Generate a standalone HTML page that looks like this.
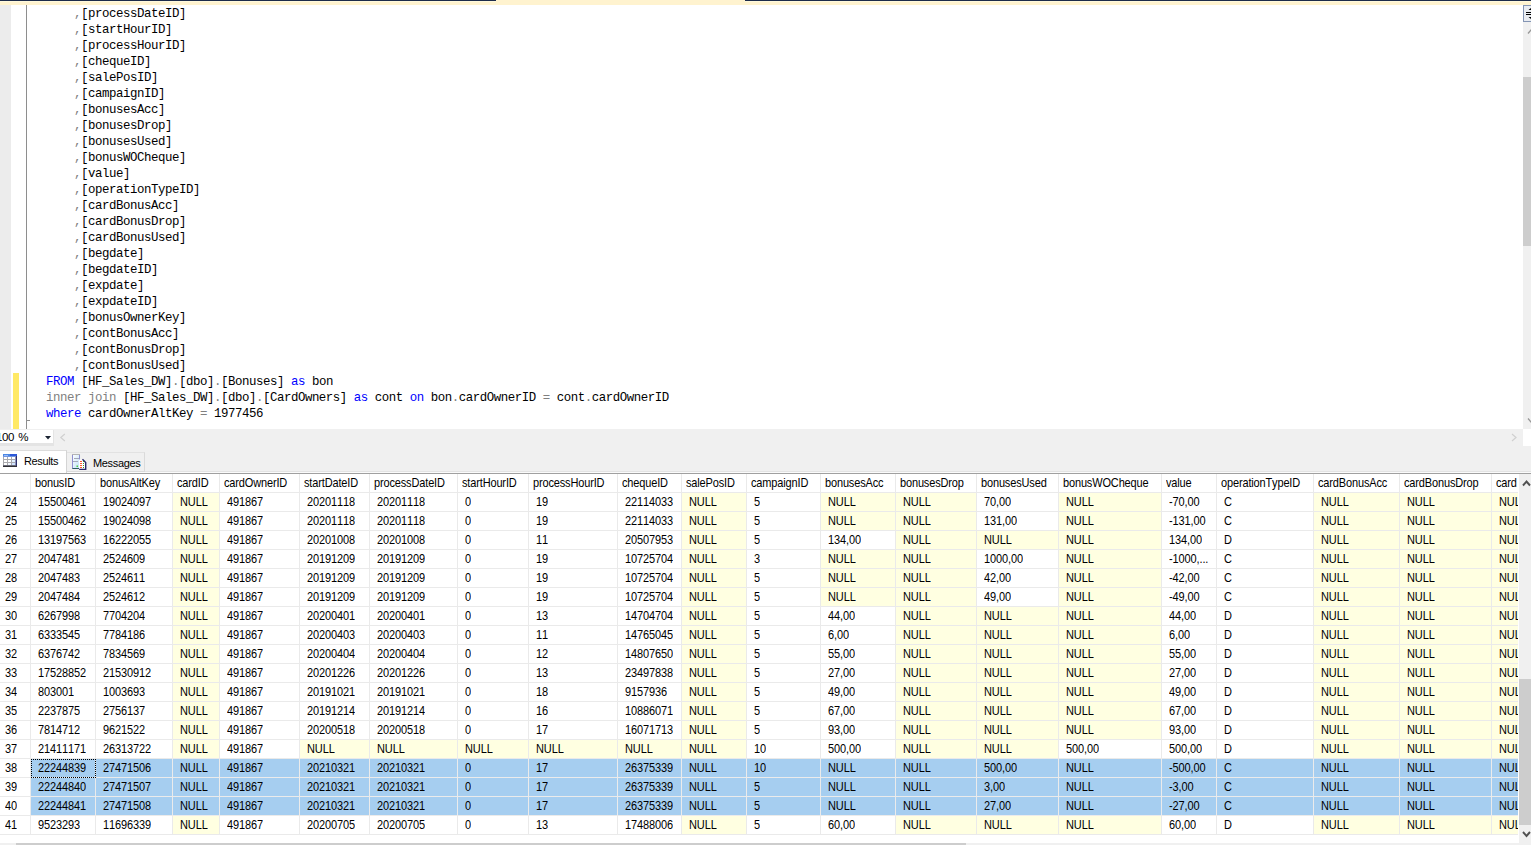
<!DOCTYPE html>
<html><head><meta charset="utf-8"><title>SQLQuery</title><style>
html,body{margin:0;padding:0;}
body{width:1531px;height:845px;overflow:hidden;background:#fff;position:relative;font-family:"Liberation Sans",sans-serif;font-size:11px;color:#000;font-kerning:none;font-variant-ligatures:none;}
div{position:absolute;box-sizing:border-box;}
#page{left:0;top:0;width:1531px;height:845px;overflow:hidden;background:#fff;}
.ln{left:46px;height:16px;line-height:16px;white-space:pre;font-family:"Liberation Mono",monospace;font-size:12.4px;letter-spacing:-0.44px;color:#000;}
.k{color:#0000ff}.g{color:#808080}
.c{height:19px;line-height:18px;padding-left:7px;white-space:nowrap;overflow:hidden;border-right:1px solid #eaeaea;border-bottom:1px solid #eaeaea;background:#fff;font-size:11px;letter-spacing:-0.12px;}
.c b{font-weight:normal;display:inline-block;transform:scaleY(1.13);transform-origin:0 13px;}
.c.h{padding-left:4px;letter-spacing:-0.15px;}
.tl{height:16px;line-height:16px;font-size:11px;letter-spacing:-0.35px;white-space:nowrap;transform:scaleY(1.07);transform-origin:0 12px;}
.c.rn{padding-left:5px;}
.c.n{background:#ffffe1;}
.c.s{background:#a6cef0;border-color:#ebebeb;}
</style></head><body><div id="page">
<!-- top strip -->
<div style="left:0;top:0;width:1531px;height:5px;background:#fff3cf"></div>
<div style="left:0;top:0;width:496px;height:1px;background:#1d2b4a"></div>
<div style="left:745px;top:0;width:786px;height:1px;background:#1d2b4a"></div>
<div style="left:0;top:1px;width:496px;height:1px;background:#fff9dc"></div>
<div style="left:745px;top:1px;width:786px;height:1px;background:#fff9dc"></div>
<!-- editor -->
<div style="left:0;top:5px;width:11px;height:424px;background:#ececec"></div>
<div style="left:13px;top:373px;width:6px;height:56px;background:#ffe966"></div>
<div style="left:26px;top:5px;width:1px;height:424px;background:#8e8e8e"></div>
<div style="left:26px;top:420px;width:4px;height:1px;background:#8e8e8e"></div>
<div class="ln" style="top:6px">    <span class="g">,</span>[processDateID]</div>
<div class="ln" style="top:22px">    <span class="g">,</span>[startHourID]</div>
<div class="ln" style="top:38px">    <span class="g">,</span>[processHourID]</div>
<div class="ln" style="top:54px">    <span class="g">,</span>[chequeID]</div>
<div class="ln" style="top:70px">    <span class="g">,</span>[salePosID]</div>
<div class="ln" style="top:86px">    <span class="g">,</span>[campaignID]</div>
<div class="ln" style="top:102px">    <span class="g">,</span>[bonusesAcc]</div>
<div class="ln" style="top:118px">    <span class="g">,</span>[bonusesDrop]</div>
<div class="ln" style="top:134px">    <span class="g">,</span>[bonusesUsed]</div>
<div class="ln" style="top:150px">    <span class="g">,</span>[bonusWOCheque]</div>
<div class="ln" style="top:166px">    <span class="g">,</span>[value]</div>
<div class="ln" style="top:182px">    <span class="g">,</span>[operationTypeID]</div>
<div class="ln" style="top:198px">    <span class="g">,</span>[cardBonusAcc]</div>
<div class="ln" style="top:214px">    <span class="g">,</span>[cardBonusDrop]</div>
<div class="ln" style="top:230px">    <span class="g">,</span>[cardBonusUsed]</div>
<div class="ln" style="top:246px">    <span class="g">,</span>[begdate]</div>
<div class="ln" style="top:262px">    <span class="g">,</span>[begdateID]</div>
<div class="ln" style="top:278px">    <span class="g">,</span>[expdate]</div>
<div class="ln" style="top:294px">    <span class="g">,</span>[expdateID]</div>
<div class="ln" style="top:310px">    <span class="g">,</span>[bonusOwnerKey]</div>
<div class="ln" style="top:326px">    <span class="g">,</span>[contBonusAcc]</div>
<div class="ln" style="top:342px">    <span class="g">,</span>[contBonusDrop]</div>
<div class="ln" style="top:358px">    <span class="g">,</span>[contBonusUsed]</div>
<div class="ln" style="top:374px"><span class="k">FROM</span> [HF_Sales_DW]<span class="g">.</span>[dbo]<span class="g">.</span>[Bonuses] <span class="k">as</span> bon</div>
<div class="ln" style="top:390px"><span class="g">inner join</span> [HF_Sales_DW]<span class="g">.</span>[dbo]<span class="g">.</span>[CardOwners] <span class="k">as</span> cont <span class="k">on</span> bon<span class="g">.</span>cardOwnerID <span class="g">=</span> cont<span class="g">.</span>cardOwnerID</div>
<div class="ln" style="top:406px"><span class="k">where</span> cardOwnerAltKey <span class="g">=</span> 1977456</div>

<!-- editor vscroll -->
<div style="left:1523px;top:5px;width:8px;height:424px;background:#f0f0f0"></div>
<div style="left:1523px;top:5px;width:9px;height:17px;background:#e9ecf1;border:1px solid #8495b4"></div>
<div style="left:1526px;top:12px;width:6px;height:1px;background:#000"></div>
<div style="left:1526px;top:14px;width:6px;height:1px;background:#000"></div>
<svg style="position:absolute;left:1523px;top:5px" width="8" height="424"><path d="M8.500 2.500l-3 2.500h3zM8.500 14.500l-3 -2.500h3z" fill="#000"/><path d="M5 28.500L8.500 24.500M5 413.500L8.500 417.500" fill="none" stroke="#989898" stroke-width="1.3"/></svg>
<div style="left:1523px;top:77px;width:8px;height:169px;background:#cdcdcd"></div>
<!-- zoom bar -->
<div style="left:0;top:429px;width:1531px;height:45px;background:#f0f0f0"></div>
<div style="left:1523px;top:429px;width:8px;height:17px;background:#fff"></div>
<div style="left:0;top:430px;width:54px;height:16px;background:#e4e4e4"></div>
<div style="left:0;top:430px;width:53px;height:13px;background:#fff"></div>
<div style="left:-4px;top:429px;height:16px;line-height:16px;font-size:11.500px;letter-spacing:-0.350px;word-spacing:1.300px;white-space:nowrap">100 %</div>
<svg style="position:absolute;left:44px;top:435px" width="8" height="6"><path d="M1 1h6l-3 3.400z" fill="#1b2433"/></svg>
<svg style="position:absolute;left:59px;top:432px" width="8" height="11"><path d="M5.800 2L1.800 5.500L5.800 9" fill="none" stroke="#d0d0d0" stroke-width="1.200"/></svg>
<svg style="position:absolute;left:1510px;top:432px" width="8" height="11"><path d="M2 2L6 5.500L2 9" fill="none" stroke="#d0d0d0" stroke-width="1.200"/></svg>
<!-- tabs -->
<div style="left:0;top:471px;width:1531px;height:1px;background:#e3e3e3"></div><div style="left:0;top:472px;width:1531px;height:1px;background:#fbfbfb"></div>
<div style="left:66px;top:452px;width:79px;height:20px;background:#f0f0f0;border:1px solid #dadada;border-top-color:#e2e2e2"></div>
<div style="left:0;top:450px;width:67px;height:23px;background:#fff;border-right:1px solid #d4d4d4;border-top:1px solid #dcdcdc"></div>
<div class="tl" style="left:24px;top:453px;">Results</div>
<div class="tl" style="left:93px;top:455px;">Messages</div>
<!-- results icon -->
<svg style="position:absolute;left:3px;top:454px" width="14" height="13" viewBox="0 0 14 13" shape-rendering="crispEdges"><rect x="0" y="0" width="14" height="13" fill="#a9a9ad"/><rect x="0" y="0" width="7" height="2" fill="#4a86e4"/><rect x="7" y="0" width="7" height="2" fill="#2c58d8"/><rect x="1" y="1" width="4" height="1" fill="#9dbcf2"/><rect x="0" y="2" width="13" height="1" fill="#6f95e2"/><rect x="1" y="3" width="3" height="2" fill="#fff"/><rect x="5" y="3" width="3" height="2" fill="#fff"/><rect x="9" y="3" width="3" height="2" fill="#fff"/><rect x="1" y="6" width="3" height="2" fill="#fff"/><rect x="5" y="6" width="3" height="2" fill="#fff"/><rect x="9" y="6" width="3" height="2" fill="#e2f1ff"/><rect x="1" y="9" width="3" height="2" fill="#fff"/><rect x="5" y="9" width="3" height="2" fill="#f2f8ff"/><rect x="9" y="9" width="3" height="2" fill="#cfe4ff"/><rect x="12" y="2" width="1" height="10" fill="#8b8fb8"/><rect x="13" y="2" width="1" height="11" fill="#2b2f6a"/><rect x="0" y="11" width="13" height="1" fill="#6a6a78"/><rect x="0" y="12" width="14" height="1" fill="#303034"/></svg>
<!-- messages icon -->
<svg style="position:absolute;left:72px;top:454px" width="15" height="16" viewBox="0 0 15 16"><defs><linearGradient id="mg" x1="0" y1="0" x2="1" y2="1"><stop offset="0" stop-color="#ffffff"/><stop offset="1" stop-color="#bfe0f8"/></linearGradient></defs><rect x="0.500" y="0.500" width="7" height="14" fill="url(#mg)" stroke="#8f8fd0"/><path d="M0 0.500h8" stroke="#b4b4b4"/><path d="M0.500 14.500h7" stroke="#2f5a60"/><path d="M2 4.500h5M1 7.500h5" stroke="#a4a8b8"/><rect x="4.500" y="11.500" width="1.500" height="1.500" fill="#4fd23c"/><path d="M7 5.500h4l2.500 2.500v7.500h-6.500z" fill="#fff"/><path d="M10.500 5.300l3.200 3.200v7h-6.500" fill="none" stroke="#2a2a6c" stroke-width="1.400"/><path d="M8 7.500h2M8 9.500h2M8 11.500h2M8 13.500h2" stroke="#ff5a30"/><path d="M11 7.500h1M11 9.500h1M11 11.500h1M11 13.500h1" stroke="#3a962e"/></svg>
<!-- grid -->
<div style="left:0;top:473px;width:1531px;height:1px;background:#a0a0a0"></div>
<div id="grid" style="left:0;top:0;width:1518px;height:843px;overflow:hidden;">
<div class="c h" style="left:0px;top:474px;width:31px"><b></b></div><div class="c h" style="left:31px;top:474px;width:65px"><b>bonusID</b></div><div class="c h" style="left:96px;top:474px;width:77px"><b>bonusAltKey</b></div><div class="c h" style="left:173px;top:474px;width:47px"><b>cardID</b></div><div class="c h" style="left:220px;top:474px;width:80px"><b>cardOwnerID</b></div><div class="c h" style="left:300px;top:474px;width:70px"><b>startDateID</b></div><div class="c h" style="left:370px;top:474px;width:88px"><b>processDateID</b></div><div class="c h" style="left:458px;top:474px;width:71px"><b>startHourID</b></div><div class="c h" style="left:529px;top:474px;width:89px"><b>processHourID</b></div><div class="c h" style="left:618px;top:474px;width:64px"><b>chequeID</b></div><div class="c h" style="left:682px;top:474px;width:65px"><b>salePosID</b></div><div class="c h" style="left:747px;top:474px;width:74px"><b>campaignID</b></div><div class="c h" style="left:821px;top:474px;width:75px"><b>bonusesAcc</b></div><div class="c h" style="left:896px;top:474px;width:81px"><b>bonusesDrop</b></div><div class="c h" style="left:977px;top:474px;width:82px"><b>bonusesUsed</b></div><div class="c h" style="left:1059px;top:474px;width:103px"><b>bonusWOCheque</b></div><div class="c h" style="left:1162px;top:474px;width:55px"><b>value</b></div><div class="c h" style="left:1217px;top:474px;width:97px"><b>operationTypeID</b></div><div class="c h" style="left:1314px;top:474px;width:86px"><b>cardBonusAcc</b></div><div class="c h" style="left:1400px;top:474px;width:92px"><b>cardBonusDrop</b></div><div class="c h" style="left:1492px;top:474px;width:27px"><b>card</b></div>
<div class="c rn" style="left:0px;top:493px;width:31px"><b>24</b></div><div class="c" style="left:31px;top:493px;width:65px"><b>15500461</b></div><div class="c" style="left:96px;top:493px;width:77px"><b>19024097</b></div><div class="c n" style="left:173px;top:493px;width:47px"><b>NULL</b></div><div class="c" style="left:220px;top:493px;width:80px"><b>491867</b></div><div class="c" style="left:300px;top:493px;width:70px"><b>20201118</b></div><div class="c" style="left:370px;top:493px;width:88px"><b>20201118</b></div><div class="c" style="left:458px;top:493px;width:71px"><b>0</b></div><div class="c" style="left:529px;top:493px;width:89px"><b>19</b></div><div class="c" style="left:618px;top:493px;width:64px"><b>22114033</b></div><div class="c n" style="left:682px;top:493px;width:65px"><b>NULL</b></div><div class="c" style="left:747px;top:493px;width:74px"><b>5</b></div><div class="c n" style="left:821px;top:493px;width:75px"><b>NULL</b></div><div class="c n" style="left:896px;top:493px;width:81px"><b>NULL</b></div><div class="c" style="left:977px;top:493px;width:82px"><b>70,00</b></div><div class="c n" style="left:1059px;top:493px;width:103px"><b>NULL</b></div><div class="c" style="left:1162px;top:493px;width:55px"><b>-70,00</b></div><div class="c" style="left:1217px;top:493px;width:97px"><b>C</b></div><div class="c n" style="left:1314px;top:493px;width:86px"><b>NULL</b></div><div class="c n" style="left:1400px;top:493px;width:92px"><b>NULL</b></div><div class="c n" style="left:1492px;top:493px;width:27px"><b>NULL</b></div>
<div class="c rn" style="left:0px;top:512px;width:31px"><b>25</b></div><div class="c" style="left:31px;top:512px;width:65px"><b>15500462</b></div><div class="c" style="left:96px;top:512px;width:77px"><b>19024098</b></div><div class="c n" style="left:173px;top:512px;width:47px"><b>NULL</b></div><div class="c" style="left:220px;top:512px;width:80px"><b>491867</b></div><div class="c" style="left:300px;top:512px;width:70px"><b>20201118</b></div><div class="c" style="left:370px;top:512px;width:88px"><b>20201118</b></div><div class="c" style="left:458px;top:512px;width:71px"><b>0</b></div><div class="c" style="left:529px;top:512px;width:89px"><b>19</b></div><div class="c" style="left:618px;top:512px;width:64px"><b>22114033</b></div><div class="c n" style="left:682px;top:512px;width:65px"><b>NULL</b></div><div class="c" style="left:747px;top:512px;width:74px"><b>5</b></div><div class="c n" style="left:821px;top:512px;width:75px"><b>NULL</b></div><div class="c n" style="left:896px;top:512px;width:81px"><b>NULL</b></div><div class="c" style="left:977px;top:512px;width:82px"><b>131,00</b></div><div class="c n" style="left:1059px;top:512px;width:103px"><b>NULL</b></div><div class="c" style="left:1162px;top:512px;width:55px"><b>-131,00</b></div><div class="c" style="left:1217px;top:512px;width:97px"><b>C</b></div><div class="c n" style="left:1314px;top:512px;width:86px"><b>NULL</b></div><div class="c n" style="left:1400px;top:512px;width:92px"><b>NULL</b></div><div class="c n" style="left:1492px;top:512px;width:27px"><b>NULL</b></div>
<div class="c rn" style="left:0px;top:531px;width:31px"><b>26</b></div><div class="c" style="left:31px;top:531px;width:65px"><b>13197563</b></div><div class="c" style="left:96px;top:531px;width:77px"><b>16222055</b></div><div class="c n" style="left:173px;top:531px;width:47px"><b>NULL</b></div><div class="c" style="left:220px;top:531px;width:80px"><b>491867</b></div><div class="c" style="left:300px;top:531px;width:70px"><b>20201008</b></div><div class="c" style="left:370px;top:531px;width:88px"><b>20201008</b></div><div class="c" style="left:458px;top:531px;width:71px"><b>0</b></div><div class="c" style="left:529px;top:531px;width:89px"><b>11</b></div><div class="c" style="left:618px;top:531px;width:64px"><b>20507953</b></div><div class="c n" style="left:682px;top:531px;width:65px"><b>NULL</b></div><div class="c" style="left:747px;top:531px;width:74px"><b>5</b></div><div class="c" style="left:821px;top:531px;width:75px"><b>134,00</b></div><div class="c n" style="left:896px;top:531px;width:81px"><b>NULL</b></div><div class="c n" style="left:977px;top:531px;width:82px"><b>NULL</b></div><div class="c n" style="left:1059px;top:531px;width:103px"><b>NULL</b></div><div class="c" style="left:1162px;top:531px;width:55px"><b>134,00</b></div><div class="c" style="left:1217px;top:531px;width:97px"><b>D</b></div><div class="c n" style="left:1314px;top:531px;width:86px"><b>NULL</b></div><div class="c n" style="left:1400px;top:531px;width:92px"><b>NULL</b></div><div class="c n" style="left:1492px;top:531px;width:27px"><b>NULL</b></div>
<div class="c rn" style="left:0px;top:550px;width:31px"><b>27</b></div><div class="c" style="left:31px;top:550px;width:65px"><b>2047481</b></div><div class="c" style="left:96px;top:550px;width:77px"><b>2524609</b></div><div class="c n" style="left:173px;top:550px;width:47px"><b>NULL</b></div><div class="c" style="left:220px;top:550px;width:80px"><b>491867</b></div><div class="c" style="left:300px;top:550px;width:70px"><b>20191209</b></div><div class="c" style="left:370px;top:550px;width:88px"><b>20191209</b></div><div class="c" style="left:458px;top:550px;width:71px"><b>0</b></div><div class="c" style="left:529px;top:550px;width:89px"><b>19</b></div><div class="c" style="left:618px;top:550px;width:64px"><b>10725704</b></div><div class="c n" style="left:682px;top:550px;width:65px"><b>NULL</b></div><div class="c" style="left:747px;top:550px;width:74px"><b>3</b></div><div class="c n" style="left:821px;top:550px;width:75px"><b>NULL</b></div><div class="c n" style="left:896px;top:550px;width:81px"><b>NULL</b></div><div class="c" style="left:977px;top:550px;width:82px"><b>1000,00</b></div><div class="c n" style="left:1059px;top:550px;width:103px"><b>NULL</b></div><div class="c" style="left:1162px;top:550px;width:55px"><b>-1000,...</b></div><div class="c" style="left:1217px;top:550px;width:97px"><b>C</b></div><div class="c n" style="left:1314px;top:550px;width:86px"><b>NULL</b></div><div class="c n" style="left:1400px;top:550px;width:92px"><b>NULL</b></div><div class="c n" style="left:1492px;top:550px;width:27px"><b>NULL</b></div>
<div class="c rn" style="left:0px;top:569px;width:31px"><b>28</b></div><div class="c" style="left:31px;top:569px;width:65px"><b>2047483</b></div><div class="c" style="left:96px;top:569px;width:77px"><b>2524611</b></div><div class="c n" style="left:173px;top:569px;width:47px"><b>NULL</b></div><div class="c" style="left:220px;top:569px;width:80px"><b>491867</b></div><div class="c" style="left:300px;top:569px;width:70px"><b>20191209</b></div><div class="c" style="left:370px;top:569px;width:88px"><b>20191209</b></div><div class="c" style="left:458px;top:569px;width:71px"><b>0</b></div><div class="c" style="left:529px;top:569px;width:89px"><b>19</b></div><div class="c" style="left:618px;top:569px;width:64px"><b>10725704</b></div><div class="c n" style="left:682px;top:569px;width:65px"><b>NULL</b></div><div class="c" style="left:747px;top:569px;width:74px"><b>5</b></div><div class="c n" style="left:821px;top:569px;width:75px"><b>NULL</b></div><div class="c n" style="left:896px;top:569px;width:81px"><b>NULL</b></div><div class="c" style="left:977px;top:569px;width:82px"><b>42,00</b></div><div class="c n" style="left:1059px;top:569px;width:103px"><b>NULL</b></div><div class="c" style="left:1162px;top:569px;width:55px"><b>-42,00</b></div><div class="c" style="left:1217px;top:569px;width:97px"><b>C</b></div><div class="c n" style="left:1314px;top:569px;width:86px"><b>NULL</b></div><div class="c n" style="left:1400px;top:569px;width:92px"><b>NULL</b></div><div class="c n" style="left:1492px;top:569px;width:27px"><b>NULL</b></div>
<div class="c rn" style="left:0px;top:588px;width:31px"><b>29</b></div><div class="c" style="left:31px;top:588px;width:65px"><b>2047484</b></div><div class="c" style="left:96px;top:588px;width:77px"><b>2524612</b></div><div class="c n" style="left:173px;top:588px;width:47px"><b>NULL</b></div><div class="c" style="left:220px;top:588px;width:80px"><b>491867</b></div><div class="c" style="left:300px;top:588px;width:70px"><b>20191209</b></div><div class="c" style="left:370px;top:588px;width:88px"><b>20191209</b></div><div class="c" style="left:458px;top:588px;width:71px"><b>0</b></div><div class="c" style="left:529px;top:588px;width:89px"><b>19</b></div><div class="c" style="left:618px;top:588px;width:64px"><b>10725704</b></div><div class="c n" style="left:682px;top:588px;width:65px"><b>NULL</b></div><div class="c" style="left:747px;top:588px;width:74px"><b>5</b></div><div class="c n" style="left:821px;top:588px;width:75px"><b>NULL</b></div><div class="c n" style="left:896px;top:588px;width:81px"><b>NULL</b></div><div class="c" style="left:977px;top:588px;width:82px"><b>49,00</b></div><div class="c n" style="left:1059px;top:588px;width:103px"><b>NULL</b></div><div class="c" style="left:1162px;top:588px;width:55px"><b>-49,00</b></div><div class="c" style="left:1217px;top:588px;width:97px"><b>C</b></div><div class="c n" style="left:1314px;top:588px;width:86px"><b>NULL</b></div><div class="c n" style="left:1400px;top:588px;width:92px"><b>NULL</b></div><div class="c n" style="left:1492px;top:588px;width:27px"><b>NULL</b></div>
<div class="c rn" style="left:0px;top:607px;width:31px"><b>30</b></div><div class="c" style="left:31px;top:607px;width:65px"><b>6267998</b></div><div class="c" style="left:96px;top:607px;width:77px"><b>7704204</b></div><div class="c n" style="left:173px;top:607px;width:47px"><b>NULL</b></div><div class="c" style="left:220px;top:607px;width:80px"><b>491867</b></div><div class="c" style="left:300px;top:607px;width:70px"><b>20200401</b></div><div class="c" style="left:370px;top:607px;width:88px"><b>20200401</b></div><div class="c" style="left:458px;top:607px;width:71px"><b>0</b></div><div class="c" style="left:529px;top:607px;width:89px"><b>13</b></div><div class="c" style="left:618px;top:607px;width:64px"><b>14704704</b></div><div class="c n" style="left:682px;top:607px;width:65px"><b>NULL</b></div><div class="c" style="left:747px;top:607px;width:74px"><b>5</b></div><div class="c" style="left:821px;top:607px;width:75px"><b>44,00</b></div><div class="c n" style="left:896px;top:607px;width:81px"><b>NULL</b></div><div class="c n" style="left:977px;top:607px;width:82px"><b>NULL</b></div><div class="c n" style="left:1059px;top:607px;width:103px"><b>NULL</b></div><div class="c" style="left:1162px;top:607px;width:55px"><b>44,00</b></div><div class="c" style="left:1217px;top:607px;width:97px"><b>D</b></div><div class="c n" style="left:1314px;top:607px;width:86px"><b>NULL</b></div><div class="c n" style="left:1400px;top:607px;width:92px"><b>NULL</b></div><div class="c n" style="left:1492px;top:607px;width:27px"><b>NULL</b></div>
<div class="c rn" style="left:0px;top:626px;width:31px"><b>31</b></div><div class="c" style="left:31px;top:626px;width:65px"><b>6333545</b></div><div class="c" style="left:96px;top:626px;width:77px"><b>7784186</b></div><div class="c n" style="left:173px;top:626px;width:47px"><b>NULL</b></div><div class="c" style="left:220px;top:626px;width:80px"><b>491867</b></div><div class="c" style="left:300px;top:626px;width:70px"><b>20200403</b></div><div class="c" style="left:370px;top:626px;width:88px"><b>20200403</b></div><div class="c" style="left:458px;top:626px;width:71px"><b>0</b></div><div class="c" style="left:529px;top:626px;width:89px"><b>11</b></div><div class="c" style="left:618px;top:626px;width:64px"><b>14765045</b></div><div class="c n" style="left:682px;top:626px;width:65px"><b>NULL</b></div><div class="c" style="left:747px;top:626px;width:74px"><b>5</b></div><div class="c" style="left:821px;top:626px;width:75px"><b>6,00</b></div><div class="c n" style="left:896px;top:626px;width:81px"><b>NULL</b></div><div class="c n" style="left:977px;top:626px;width:82px"><b>NULL</b></div><div class="c n" style="left:1059px;top:626px;width:103px"><b>NULL</b></div><div class="c" style="left:1162px;top:626px;width:55px"><b>6,00</b></div><div class="c" style="left:1217px;top:626px;width:97px"><b>D</b></div><div class="c n" style="left:1314px;top:626px;width:86px"><b>NULL</b></div><div class="c n" style="left:1400px;top:626px;width:92px"><b>NULL</b></div><div class="c n" style="left:1492px;top:626px;width:27px"><b>NULL</b></div>
<div class="c rn" style="left:0px;top:645px;width:31px"><b>32</b></div><div class="c" style="left:31px;top:645px;width:65px"><b>6376742</b></div><div class="c" style="left:96px;top:645px;width:77px"><b>7834569</b></div><div class="c n" style="left:173px;top:645px;width:47px"><b>NULL</b></div><div class="c" style="left:220px;top:645px;width:80px"><b>491867</b></div><div class="c" style="left:300px;top:645px;width:70px"><b>20200404</b></div><div class="c" style="left:370px;top:645px;width:88px"><b>20200404</b></div><div class="c" style="left:458px;top:645px;width:71px"><b>0</b></div><div class="c" style="left:529px;top:645px;width:89px"><b>12</b></div><div class="c" style="left:618px;top:645px;width:64px"><b>14807650</b></div><div class="c n" style="left:682px;top:645px;width:65px"><b>NULL</b></div><div class="c" style="left:747px;top:645px;width:74px"><b>5</b></div><div class="c" style="left:821px;top:645px;width:75px"><b>55,00</b></div><div class="c n" style="left:896px;top:645px;width:81px"><b>NULL</b></div><div class="c n" style="left:977px;top:645px;width:82px"><b>NULL</b></div><div class="c n" style="left:1059px;top:645px;width:103px"><b>NULL</b></div><div class="c" style="left:1162px;top:645px;width:55px"><b>55,00</b></div><div class="c" style="left:1217px;top:645px;width:97px"><b>D</b></div><div class="c n" style="left:1314px;top:645px;width:86px"><b>NULL</b></div><div class="c n" style="left:1400px;top:645px;width:92px"><b>NULL</b></div><div class="c n" style="left:1492px;top:645px;width:27px"><b>NULL</b></div>
<div class="c rn" style="left:0px;top:664px;width:31px"><b>33</b></div><div class="c" style="left:31px;top:664px;width:65px"><b>17528852</b></div><div class="c" style="left:96px;top:664px;width:77px"><b>21530912</b></div><div class="c n" style="left:173px;top:664px;width:47px"><b>NULL</b></div><div class="c" style="left:220px;top:664px;width:80px"><b>491867</b></div><div class="c" style="left:300px;top:664px;width:70px"><b>20201226</b></div><div class="c" style="left:370px;top:664px;width:88px"><b>20201226</b></div><div class="c" style="left:458px;top:664px;width:71px"><b>0</b></div><div class="c" style="left:529px;top:664px;width:89px"><b>13</b></div><div class="c" style="left:618px;top:664px;width:64px"><b>23497838</b></div><div class="c n" style="left:682px;top:664px;width:65px"><b>NULL</b></div><div class="c" style="left:747px;top:664px;width:74px"><b>5</b></div><div class="c" style="left:821px;top:664px;width:75px"><b>27,00</b></div><div class="c n" style="left:896px;top:664px;width:81px"><b>NULL</b></div><div class="c n" style="left:977px;top:664px;width:82px"><b>NULL</b></div><div class="c n" style="left:1059px;top:664px;width:103px"><b>NULL</b></div><div class="c" style="left:1162px;top:664px;width:55px"><b>27,00</b></div><div class="c" style="left:1217px;top:664px;width:97px"><b>D</b></div><div class="c n" style="left:1314px;top:664px;width:86px"><b>NULL</b></div><div class="c n" style="left:1400px;top:664px;width:92px"><b>NULL</b></div><div class="c n" style="left:1492px;top:664px;width:27px"><b>NULL</b></div>
<div class="c rn" style="left:0px;top:683px;width:31px"><b>34</b></div><div class="c" style="left:31px;top:683px;width:65px"><b>803001</b></div><div class="c" style="left:96px;top:683px;width:77px"><b>1003693</b></div><div class="c n" style="left:173px;top:683px;width:47px"><b>NULL</b></div><div class="c" style="left:220px;top:683px;width:80px"><b>491867</b></div><div class="c" style="left:300px;top:683px;width:70px"><b>20191021</b></div><div class="c" style="left:370px;top:683px;width:88px"><b>20191021</b></div><div class="c" style="left:458px;top:683px;width:71px"><b>0</b></div><div class="c" style="left:529px;top:683px;width:89px"><b>18</b></div><div class="c" style="left:618px;top:683px;width:64px"><b>9157936</b></div><div class="c n" style="left:682px;top:683px;width:65px"><b>NULL</b></div><div class="c" style="left:747px;top:683px;width:74px"><b>5</b></div><div class="c" style="left:821px;top:683px;width:75px"><b>49,00</b></div><div class="c n" style="left:896px;top:683px;width:81px"><b>NULL</b></div><div class="c n" style="left:977px;top:683px;width:82px"><b>NULL</b></div><div class="c n" style="left:1059px;top:683px;width:103px"><b>NULL</b></div><div class="c" style="left:1162px;top:683px;width:55px"><b>49,00</b></div><div class="c" style="left:1217px;top:683px;width:97px"><b>D</b></div><div class="c n" style="left:1314px;top:683px;width:86px"><b>NULL</b></div><div class="c n" style="left:1400px;top:683px;width:92px"><b>NULL</b></div><div class="c n" style="left:1492px;top:683px;width:27px"><b>NULL</b></div>
<div class="c rn" style="left:0px;top:702px;width:31px"><b>35</b></div><div class="c" style="left:31px;top:702px;width:65px"><b>2237875</b></div><div class="c" style="left:96px;top:702px;width:77px"><b>2756137</b></div><div class="c n" style="left:173px;top:702px;width:47px"><b>NULL</b></div><div class="c" style="left:220px;top:702px;width:80px"><b>491867</b></div><div class="c" style="left:300px;top:702px;width:70px"><b>20191214</b></div><div class="c" style="left:370px;top:702px;width:88px"><b>20191214</b></div><div class="c" style="left:458px;top:702px;width:71px"><b>0</b></div><div class="c" style="left:529px;top:702px;width:89px"><b>16</b></div><div class="c" style="left:618px;top:702px;width:64px"><b>10886071</b></div><div class="c n" style="left:682px;top:702px;width:65px"><b>NULL</b></div><div class="c" style="left:747px;top:702px;width:74px"><b>5</b></div><div class="c" style="left:821px;top:702px;width:75px"><b>67,00</b></div><div class="c n" style="left:896px;top:702px;width:81px"><b>NULL</b></div><div class="c n" style="left:977px;top:702px;width:82px"><b>NULL</b></div><div class="c n" style="left:1059px;top:702px;width:103px"><b>NULL</b></div><div class="c" style="left:1162px;top:702px;width:55px"><b>67,00</b></div><div class="c" style="left:1217px;top:702px;width:97px"><b>D</b></div><div class="c n" style="left:1314px;top:702px;width:86px"><b>NULL</b></div><div class="c n" style="left:1400px;top:702px;width:92px"><b>NULL</b></div><div class="c n" style="left:1492px;top:702px;width:27px"><b>NULL</b></div>
<div class="c rn" style="left:0px;top:721px;width:31px"><b>36</b></div><div class="c" style="left:31px;top:721px;width:65px"><b>7814712</b></div><div class="c" style="left:96px;top:721px;width:77px"><b>9621522</b></div><div class="c n" style="left:173px;top:721px;width:47px"><b>NULL</b></div><div class="c" style="left:220px;top:721px;width:80px"><b>491867</b></div><div class="c" style="left:300px;top:721px;width:70px"><b>20200518</b></div><div class="c" style="left:370px;top:721px;width:88px"><b>20200518</b></div><div class="c" style="left:458px;top:721px;width:71px"><b>0</b></div><div class="c" style="left:529px;top:721px;width:89px"><b>17</b></div><div class="c" style="left:618px;top:721px;width:64px"><b>16071713</b></div><div class="c n" style="left:682px;top:721px;width:65px"><b>NULL</b></div><div class="c" style="left:747px;top:721px;width:74px"><b>5</b></div><div class="c" style="left:821px;top:721px;width:75px"><b>93,00</b></div><div class="c n" style="left:896px;top:721px;width:81px"><b>NULL</b></div><div class="c n" style="left:977px;top:721px;width:82px"><b>NULL</b></div><div class="c n" style="left:1059px;top:721px;width:103px"><b>NULL</b></div><div class="c" style="left:1162px;top:721px;width:55px"><b>93,00</b></div><div class="c" style="left:1217px;top:721px;width:97px"><b>D</b></div><div class="c n" style="left:1314px;top:721px;width:86px"><b>NULL</b></div><div class="c n" style="left:1400px;top:721px;width:92px"><b>NULL</b></div><div class="c n" style="left:1492px;top:721px;width:27px"><b>NULL</b></div>
<div class="c rn" style="left:0px;top:740px;width:31px"><b>37</b></div><div class="c" style="left:31px;top:740px;width:65px"><b>21411171</b></div><div class="c" style="left:96px;top:740px;width:77px"><b>26313722</b></div><div class="c n" style="left:173px;top:740px;width:47px"><b>NULL</b></div><div class="c" style="left:220px;top:740px;width:80px"><b>491867</b></div><div class="c n" style="left:300px;top:740px;width:70px"><b>NULL</b></div><div class="c n" style="left:370px;top:740px;width:88px"><b>NULL</b></div><div class="c n" style="left:458px;top:740px;width:71px"><b>NULL</b></div><div class="c n" style="left:529px;top:740px;width:89px"><b>NULL</b></div><div class="c n" style="left:618px;top:740px;width:64px"><b>NULL</b></div><div class="c n" style="left:682px;top:740px;width:65px"><b>NULL</b></div><div class="c" style="left:747px;top:740px;width:74px"><b>10</b></div><div class="c" style="left:821px;top:740px;width:75px"><b>500,00</b></div><div class="c n" style="left:896px;top:740px;width:81px"><b>NULL</b></div><div class="c n" style="left:977px;top:740px;width:82px"><b>NULL</b></div><div class="c" style="left:1059px;top:740px;width:103px"><b>500,00</b></div><div class="c" style="left:1162px;top:740px;width:55px"><b>500,00</b></div><div class="c" style="left:1217px;top:740px;width:97px"><b>D</b></div><div class="c n" style="left:1314px;top:740px;width:86px"><b>NULL</b></div><div class="c n" style="left:1400px;top:740px;width:92px"><b>NULL</b></div><div class="c n" style="left:1492px;top:740px;width:27px"><b>NULL</b></div>
<div class="c rn" style="left:0px;top:759px;width:31px"><b>38</b></div><div class="c s" style="left:31px;top:759px;width:65px"><b>22244839</b></div><div class="c s" style="left:96px;top:759px;width:77px"><b>27471506</b></div><div class="c s" style="left:173px;top:759px;width:47px"><b>NULL</b></div><div class="c s" style="left:220px;top:759px;width:80px"><b>491867</b></div><div class="c s" style="left:300px;top:759px;width:70px"><b>20210321</b></div><div class="c s" style="left:370px;top:759px;width:88px"><b>20210321</b></div><div class="c s" style="left:458px;top:759px;width:71px"><b>0</b></div><div class="c s" style="left:529px;top:759px;width:89px"><b>17</b></div><div class="c s" style="left:618px;top:759px;width:64px"><b>26375339</b></div><div class="c s" style="left:682px;top:759px;width:65px"><b>NULL</b></div><div class="c s" style="left:747px;top:759px;width:74px"><b>10</b></div><div class="c s" style="left:821px;top:759px;width:75px"><b>NULL</b></div><div class="c s" style="left:896px;top:759px;width:81px"><b>NULL</b></div><div class="c s" style="left:977px;top:759px;width:82px"><b>500,00</b></div><div class="c s" style="left:1059px;top:759px;width:103px"><b>NULL</b></div><div class="c s" style="left:1162px;top:759px;width:55px"><b>-500,00</b></div><div class="c s" style="left:1217px;top:759px;width:97px"><b>C</b></div><div class="c s" style="left:1314px;top:759px;width:86px"><b>NULL</b></div><div class="c s" style="left:1400px;top:759px;width:92px"><b>NULL</b></div><div class="c s" style="left:1492px;top:759px;width:27px"><b>NULL</b></div>
<div class="c rn" style="left:0px;top:778px;width:31px"><b>39</b></div><div class="c s" style="left:31px;top:778px;width:65px"><b>22244840</b></div><div class="c s" style="left:96px;top:778px;width:77px"><b>27471507</b></div><div class="c s" style="left:173px;top:778px;width:47px"><b>NULL</b></div><div class="c s" style="left:220px;top:778px;width:80px"><b>491867</b></div><div class="c s" style="left:300px;top:778px;width:70px"><b>20210321</b></div><div class="c s" style="left:370px;top:778px;width:88px"><b>20210321</b></div><div class="c s" style="left:458px;top:778px;width:71px"><b>0</b></div><div class="c s" style="left:529px;top:778px;width:89px"><b>17</b></div><div class="c s" style="left:618px;top:778px;width:64px"><b>26375339</b></div><div class="c s" style="left:682px;top:778px;width:65px"><b>NULL</b></div><div class="c s" style="left:747px;top:778px;width:74px"><b>5</b></div><div class="c s" style="left:821px;top:778px;width:75px"><b>NULL</b></div><div class="c s" style="left:896px;top:778px;width:81px"><b>NULL</b></div><div class="c s" style="left:977px;top:778px;width:82px"><b>3,00</b></div><div class="c s" style="left:1059px;top:778px;width:103px"><b>NULL</b></div><div class="c s" style="left:1162px;top:778px;width:55px"><b>-3,00</b></div><div class="c s" style="left:1217px;top:778px;width:97px"><b>C</b></div><div class="c s" style="left:1314px;top:778px;width:86px"><b>NULL</b></div><div class="c s" style="left:1400px;top:778px;width:92px"><b>NULL</b></div><div class="c s" style="left:1492px;top:778px;width:27px"><b>NULL</b></div>
<div class="c rn" style="left:0px;top:797px;width:31px"><b>40</b></div><div class="c s" style="left:31px;top:797px;width:65px"><b>22244841</b></div><div class="c s" style="left:96px;top:797px;width:77px"><b>27471508</b></div><div class="c s" style="left:173px;top:797px;width:47px"><b>NULL</b></div><div class="c s" style="left:220px;top:797px;width:80px"><b>491867</b></div><div class="c s" style="left:300px;top:797px;width:70px"><b>20210321</b></div><div class="c s" style="left:370px;top:797px;width:88px"><b>20210321</b></div><div class="c s" style="left:458px;top:797px;width:71px"><b>0</b></div><div class="c s" style="left:529px;top:797px;width:89px"><b>17</b></div><div class="c s" style="left:618px;top:797px;width:64px"><b>26375339</b></div><div class="c s" style="left:682px;top:797px;width:65px"><b>NULL</b></div><div class="c s" style="left:747px;top:797px;width:74px"><b>5</b></div><div class="c s" style="left:821px;top:797px;width:75px"><b>NULL</b></div><div class="c s" style="left:896px;top:797px;width:81px"><b>NULL</b></div><div class="c s" style="left:977px;top:797px;width:82px"><b>27,00</b></div><div class="c s" style="left:1059px;top:797px;width:103px"><b>NULL</b></div><div class="c s" style="left:1162px;top:797px;width:55px"><b>-27,00</b></div><div class="c s" style="left:1217px;top:797px;width:97px"><b>C</b></div><div class="c s" style="left:1314px;top:797px;width:86px"><b>NULL</b></div><div class="c s" style="left:1400px;top:797px;width:92px"><b>NULL</b></div><div class="c s" style="left:1492px;top:797px;width:27px"><b>NULL</b></div>
<div class="c rn" style="left:0px;top:816px;width:31px"><b>41</b></div><div class="c" style="left:31px;top:816px;width:65px"><b>9523293</b></div><div class="c" style="left:96px;top:816px;width:77px"><b>11696339</b></div><div class="c n" style="left:173px;top:816px;width:47px"><b>NULL</b></div><div class="c" style="left:220px;top:816px;width:80px"><b>491867</b></div><div class="c" style="left:300px;top:816px;width:70px"><b>20200705</b></div><div class="c" style="left:370px;top:816px;width:88px"><b>20200705</b></div><div class="c" style="left:458px;top:816px;width:71px"><b>0</b></div><div class="c" style="left:529px;top:816px;width:89px"><b>13</b></div><div class="c" style="left:618px;top:816px;width:64px"><b>17488006</b></div><div class="c n" style="left:682px;top:816px;width:65px"><b>NULL</b></div><div class="c" style="left:747px;top:816px;width:74px"><b>5</b></div><div class="c" style="left:821px;top:816px;width:75px"><b>60,00</b></div><div class="c n" style="left:896px;top:816px;width:81px"><b>NULL</b></div><div class="c n" style="left:977px;top:816px;width:82px"><b>NULL</b></div><div class="c n" style="left:1059px;top:816px;width:103px"><b>NULL</b></div><div class="c" style="left:1162px;top:816px;width:55px"><b>60,00</b></div><div class="c" style="left:1217px;top:816px;width:97px"><b>D</b></div><div class="c n" style="left:1314px;top:816px;width:86px"><b>NULL</b></div><div class="c n" style="left:1400px;top:816px;width:92px"><b>NULL</b></div><div class="c n" style="left:1492px;top:816px;width:27px"><b>NULL</b></div>

<div style="left:31px;top:759px;width:65px;height:19px;border:1px dotted #000;"></div>
</div>
<!-- grid vscroll -->
<div style="left:1518px;top:474px;width:1px;height:369px;background:#fff"></div>
<div style="left:1519px;top:474px;width:12px;height:371px;background:#f0f0f0"></div>
<div style="left:1519px;top:679px;width:12px;height:146px;background:#cdcdcd"></div>
<svg style="position:absolute;left:1519px;top:478px" width="12" height="10"><path d="M4 7.500L7.500 3.500L11 7.500" fill="none" stroke="#505050" stroke-width="1.900"/></svg>
<svg style="position:absolute;left:1519px;top:828px" width="12" height="10"><path d="M4 4L7.500 8L11 4" fill="none" stroke="#505050" stroke-width="1.900"/></svg>
<!-- grid hscroll -->
<div style="left:0;top:843px;width:1519px;height:2px;background:#f0f0f0"></div>
<div style="left:16px;top:843px;width:950px;height:2px;background:#cdcdcd"></div>
</div></body></html>
